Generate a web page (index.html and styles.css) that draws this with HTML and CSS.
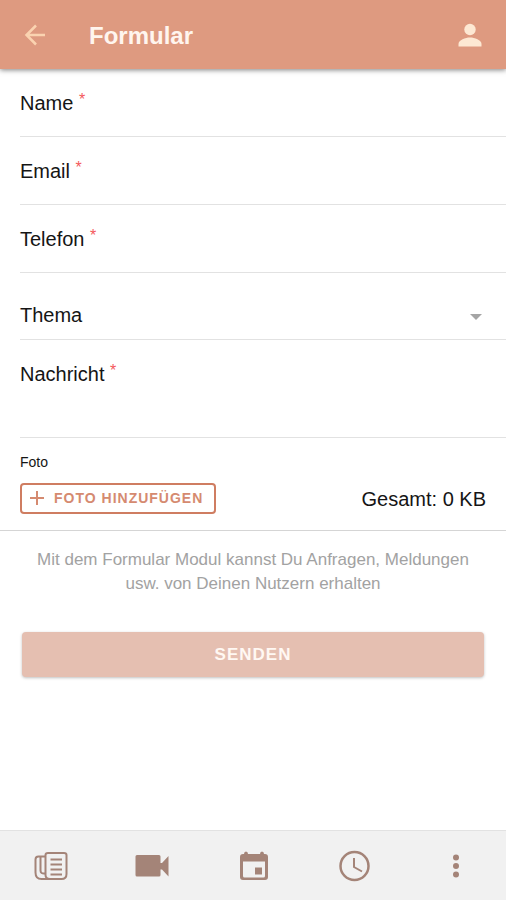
FILE: index.html
```html
<!DOCTYPE html>
<html lang="de">
<head>
<meta charset="utf-8">
<meta name="viewport" content="width=device-width, initial-scale=1">
<title>Formular</title>
<link rel="stylesheet" href="styles.css">
</head>
<body>
<header class="toolbar">
  <button class="icon-button" type="button" aria-label="Zurück">
    <svg width="32" height="32" viewBox="0 0 32 32" fill="none" stroke="currentColor" stroke-width="2.500"><path d="M25 15H6.500M16 5.500L6.500 15l9.500 9.500"/></svg>
  </button>
  <h1 class="title">Formular</h1>
  <button class="icon-button" type="button" aria-label="Profil">
    <svg width="32" height="32" viewBox="0 0 32 32" fill="currentColor"><circle cx="16" cy="9.500" r="5.700"/><path d="M4.500 26.500v-2.500c0-4 7-6.500 11.500-6.500s11.500 2.500 11.500 6.500v2.500z"/></svg>
  </button>
</header>
<main class="content">
  <form class="form">
    <div class="field">
      <label for="name">Name <span class="required">*</span></label>
      <input id="name" class="control" type="text" required>
    </div>
    <div class="field">
      <label for="email">Email <span class="required">*</span></label>
      <input id="email" class="control" type="email" required>
    </div>
    <div class="field">
      <label for="phone">Telefon <span class="required">*</span></label>
      <input id="phone" class="control" type="tel" required>
    </div>
    <div class="field field-select">
      <label for="topic">Thema</label>
      <select id="topic" class="select"><option value=""></option></select>
      <svg class="caret" width="12" height="10" viewBox="0 0 12 10" fill="currentColor" aria-hidden="true"><path d="M0 4h12L6 10z"/></svg>
    </div>
    <div class="field">
      <label for="message">Nachricht <span class="required">*</span></label>
      <textarea id="message" class="control message" required></textarea>
    </div>
    <div class="photo">
      <h2 class="photo-title">Foto</h2>
      <div class="photo-row">
        <button class="add" type="button">
          <svg width="14" height="14" viewBox="0 0 14 14" fill="none" stroke="currentColor" stroke-width="2" aria-hidden="true"><path d="M7 0v14M0 7h14"/></svg>
          FOTO HINZUFÜGEN
        </button>
        <span class="total">Gesamt: 0 KB</span>
      </div>
    </div>
    <p class="hint">Mit dem Formular Modul kannst Du Anfragen, Meldungen usw. von Deinen Nutzern erhalten</p>
    <button class="submit" type="submit">SENDEN</button>
  </form>
</main>
<nav class="tabs" aria-label="Bereiche">
  <a class="tab" href="#news" aria-label="Neuigkeiten">
    <svg width="36" height="32" viewBox="0 0 36 32" fill="none" stroke="currentColor" stroke-width="2"><path d="M15 3h16q2.500 0 2.500 2v19q0 5-5 5H17q-4.500 0-4.500-4V5q0-2 2.500-2zM12 6.500H5.500Q2.500 6.500 2.500 9.500v13q0 6.500 6 6.500H17M7.500 7v13.500q0 3.500 4.500 3"/><path d="M17.500 9.500h11.500M17.500 14.500h11.500M17.500 19.500h11.500M17.500 24.500h11.500"/></svg>
  </a>
  <a class="tab" href="#video" aria-label="Videos">
    <svg width="36" height="32" viewBox="0 0 36 32" fill="currentColor"><path d="M3 5h22q1.500 0 1.500 1.500V13h1.500L34.500 6v20.500L28 19.500h-1.500V25q0 1.500-1.500 1.500H3q-1.500 0-1.500-1.500V6.500Q1.500 5 3 5z"/></svg>
  </a>
  <a class="tab" href="#calendar" aria-label="Kalender">
    <svg width="36" height="32" viewBox="0 0 36 32" fill="currentColor"><path fill-rule="evenodd" d="M9 4q0-2.500 2-2.500T13 4h12q0-2.500 2-2.500T29 4h1q3 0 3 3v20q0 3-3 3H8q-3 0-3-3V7q0-3 3-3zM8 11.500v14.500q0 1.500 1.500 1.500h19q1.500 0 1.500-1.500V11.500z"/><path d="M20 17.500h7v7h-7z"/></svg>
  </a>
  <a class="tab" href="#times" aria-label="Zeiten">
    <svg width="36" height="32" viewBox="0 0 36 32" fill="none" stroke="currentColor" stroke-width="2.500"><circle cx="18.500" cy="16" r="14"/><path stroke-width="2" d="M18 8v9l8 4.500"/></svg>
  </a>
  <a class="tab" href="#more" aria-label="Mehr">
    <svg width="36" height="32" viewBox="0 0 36 32" fill="currentColor"><circle cx="19" cy="7.500" r="3"/><circle cx="19" cy="16" r="3"/><circle cx="19" cy="24.500" r="3"/></svg>
  </a>
</nav>
</body>
</html>
```
FILE: styles.css
```css
* { box-sizing: border-box; }

body {
  margin: 0;
  min-height: 100vh;
  display: flex;
  flex-direction: column;
  background: #fff;
  color: #151515;
  font: 20px/24px "Liberation Sans", Arial, sans-serif;
}

button, input, select, textarea { font: inherit; }

.toolbar {
  display: flex;
  align-items: center;
  padding: 20px 20px 17px;
  background: #de9a80;
  box-shadow: 0 1px 5px rgba(0, 0, 0, .5);
}

.icon-button {
  display: flex;
  padding: 0;
  border: 0;
  background: none;
  color: #fde8d3;
}

.icon-button:first-child { color: #fad3b0; }

.title {
  flex: 1;
  margin: 0;
  padding-left: 37px;
  color: #fff5ee;
  font-size: 24px;
  line-height: 32px;
}

.content { flex: 1; }

.field {
  display: flex;
  flex-direction: column;
  margin-left: 20px;
  padding-top: 22px;
  border-bottom: 1px solid #e2e2e2;
}

.required {
  color: #f4595c;
  font-size: 16px;
  line-height: 16px;
  vertical-align: text-top;
}

.control {
  width: 100%;
  height: 21px;
  padding: 0 20px 0 0;
  border: 0;
  outline: 0;
  background: none;
}

.field-select {
  flex-direction: row;
  align-items: center;
  padding: 30px 24px 12px 0;
}

.select {
  flex: 1;
  height: 24px;
  border: 0;
  appearance: none;
  background: none;
}

.caret { color: #a5a5a5; }

.message {
  height: 51px;
  resize: none;
}

.photo {
  padding: 14px 20px 16px;
  border-bottom: 1px solid #d5d5d5;
}

.photo-title {
  margin: 0 0 11px;
  font-size: 14px;
  line-height: 20px;
  font-weight: 400;
}

.photo-row {
  display: flex;
  align-items: center;
  justify-content: space-between;
}

.add {
  display: flex;
  align-items: center;
  gap: 10px;
  height: 31px;
  padding: 0 11px 2px 8px;
  border: 2px solid #cf7d61;
  border-radius: 4px;
  background: none;
  color: #d58a70;
  font-size: 14px;
  font-weight: 700;
  letter-spacing: 1px;
}

.hint {
  margin: 0;
  padding: 17px 20px 0;
  color: #a2a2a2;
  font-size: 17px;
  text-align: center;
}

.submit {
  display: block;
  width: calc(100% - 44px);
  height: 45px;
  margin: 36px 22px 24px;
  border: 0;
  border-radius: 4px;
  background: #e5bfb1;
  box-shadow: 0 1px 3px rgba(0, 0, 0, .25);
  color: #fff8f3;
  font-size: 17px;
  font-weight: 700;
  letter-spacing: 1px;
}

.tabs {
  display: flex;
  height: 70px;
  border-top: 1px solid #e2e2e2;
  background: #f1f1f1;
}

.tab {
  flex: 1;
  display: flex;
  align-items: center;
  justify-content: center;
  color: #a48478;
}
```
